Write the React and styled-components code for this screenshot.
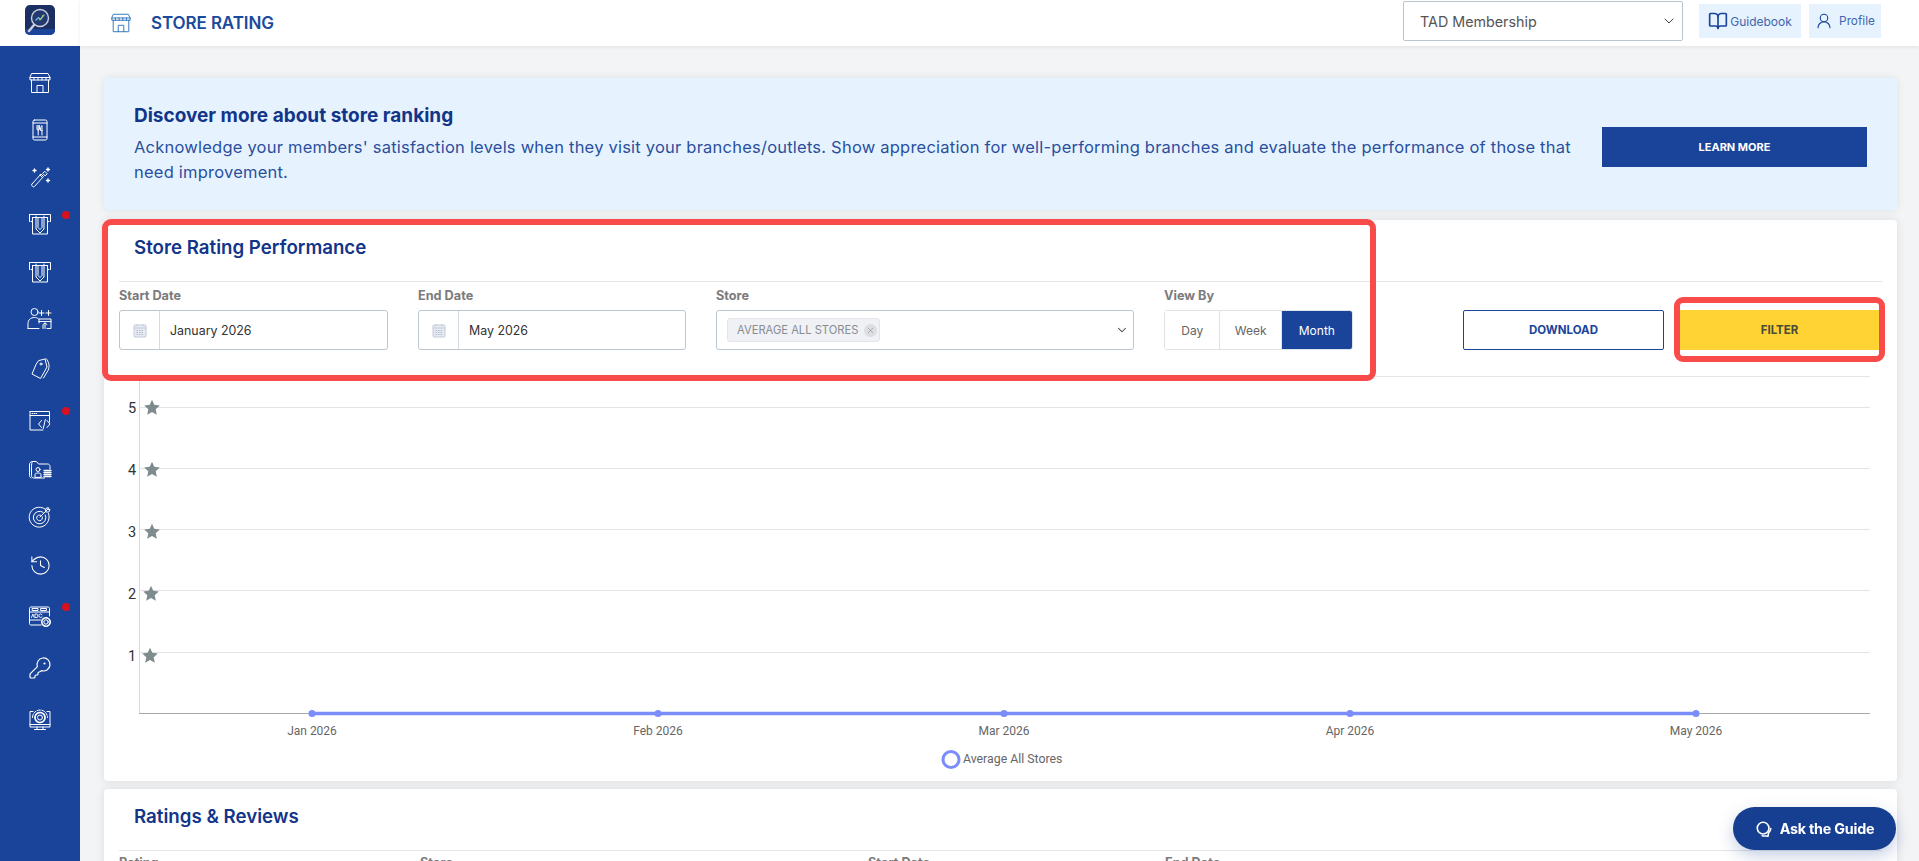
import styled, { createGlobalStyle } from "styled-components";
import { ChevronDown, X, BookOpen, UserRound, KeyRound, History } from "lucide-react";

const GlobalStyle = createGlobalStyle`
  html, body { margin: 0; padding: 0; height: 100%; overflow: hidden; }
  body { background: #f3f4f6; font-family: Inter, "Open Sans", sans-serif; }
  * { box-sizing: border-box; }
`;

const Shell = styled.div`
  display: flex;
  height: 100vh;
  overflow: hidden;
`;

const Side = styled.aside`
  width: 80px;
  flex: none;
  display: flex;
  flex-direction: column;
`;

const LogoBox = styled.div`
  height: 46px;
  background: #fff;
  display: flex;
  justify-content: center;
  padding-top: 5px;
`;

const Logo = styled.svg`
  width: 30px;
  height: 30px;
`;

const Nav = styled.nav`
  flex: 1;
  background: #1a4499;
  padding-top: 13px;
  display: flex;
  flex-direction: column;
`;

const NavItem = styled.div`
  position: relative;
  height: ${(p) => p.$h}px;
  flex: none;
  display: flex;
  justify-content: center;
  align-items: center;
  color: #fff;
`;

const Dot = styled.span`
  position: absolute;
  left: 62px;
  top: ${(p) => p.$top}px;
  width: 8px;
  height: 8px;
  border-radius: 50%;
  background: #d9101f;
`;

const Icon = styled.svg`
  width: ${(p) => p.$w || 24}px;
  height: ${(p) => p.$s || 24}px;
  fill: none;
  stroke: currentColor;
  stroke-width: 1;
  stroke-linejoin: round;
  stroke-linecap: round;
  flex: none;
`;

const Main = styled.main`
  flex: 1;
  min-width: 0;
  display: flex;
  flex-direction: column;
`;

const Header = styled.header`
  height: 46px;
  flex: none;
  background: #fff;
  box-shadow: 0 1px 4px rgba(0, 0, 0, 0.08);
  display: flex;
  align-items: center;
  padding: 0 38px 0 30px;
  position: relative;
  z-index: 1;
`;

const HeaderIcon = styled.span`
  display: flex;
  color: #2a70b8;
`;

const PageTitle = styled.h1`
  margin: 0 0 0 19px;
  font-size: 17px;
  font-weight: 600;
  letter-spacing: -0.1px;
  color: #1a4a9c;
`;

const HeaderRight = styled.div`
  margin-left: auto;
  display: flex;
  align-items: flex-start;
  height: 100%;
  padding-top: 1px;
`;

const MemberSelect = styled.div`
  width: 280px;
  height: 40px;
  border: 1px solid #b9c4d0;
  border-radius: 2px;
  background: #fff;
  display: flex;
  align-items: center;
  justify-content: space-between;
  padding: 0 5px 0 16px;
  font-size: 14.3px;
  color: #555;
  margin-right: 16px;
`;

const HeadBtn = styled.div`
  height: 34px;
  margin-top: 3px;
  width: ${(p) => p.$w}px;
  margin-left: ${(p) => p.$ml || 0}px;
  background: #e6f3fe;
  color: #3f66b0;
  display: flex;
  align-items: center;
  justify-content: center;
  gap: ${(p) => p.$gap}px;
  font-size: ${(p) => p.$fs}px;
`;

const Content = styled.div`
  flex: 1;
  padding: 32px 22px 0 24px;
  display: flex;
  flex-direction: column;
`;

const Banner = styled.section`
  height: 132px;
  flex: none;
  background: #e6f3fe;
  border-radius: 4px;
  box-shadow: 0 0 10px rgba(0, 0, 0, 0.08);
  display: flex;
  align-items: center;
  justify-content: space-between;
  padding: 0 30px;
  margin-bottom: 10px;
`;

const BannerText = styled.div`
  width: 1450px;
  color: #2a4f9e;
`;

const BannerTitle = styled.h2`
  margin: 0 0 8px;
  font-size: 19px;
  font-weight: 700;
  color: #12358a;
`;

const BannerBody = styled.p`
  margin: 0;
  font-size: 16.5px;
  letter-spacing: 0.22px;
  line-height: 25px;
`;

const LearnBtn = styled.div`
  width: 265px;
  height: 40px;
  margin-top: 5px;
  background: #1a4499;
  color: #fff;
  font-size: 11px;
  font-weight: 700;
  display: flex;
  align-items: center;
  justify-content: center;
`;

const Card = styled.section`
  background: #fff;
  border-radius: 4px;
  box-shadow: 0 0 10px rgba(0, 0, 0, 0.1);
  margin-bottom: 8px;
  flex: none;
  padding: 0 15px;
  position: relative;
`;

const CardTitle = styled.h3`
  margin: 0;
  height: 62px;
  line-height: 55px;
  padding-left: 15px;
  font-size: 18.7px;
  font-weight: 600;
  color: #12358a;
  border-bottom: 1px solid #e3e5e8;
`;

const FilterRow = styled.div`
  display: flex;
  align-items: flex-end;
  gap: 30px;
  padding: 9px 2px 26px 0;
  height: 94px;
  width: 1777px;
  margin-right: -15px;
`;

const Field = styled.div`
  width: ${(p) => p.$w}px;
  flex: none;
`;

const Label = styled.div`
  font-size: 12.7px;
  font-weight: 700;
  color: #7b7b7b;
  line-height: 14px;
  margin-bottom: 7px;
`;

const InputBox = styled.div`
  height: 40px;
  border: 1px solid #bcc6d1;
  border-radius: 3px;
  display: flex;
  align-items: center;
  font-size: 12.4px;
  color: #333;
`;

const Addon = styled.div`
  width: 40px;
  align-self: stretch;
  border-right: 1px solid #d5dbe2;
  display: flex;
  align-items: center;
  justify-content: center;
  margin-right: 10px;
`;

const Chip = styled.div`
  height: 24px;
  margin-left: 10px;
  padding: 0 2px 0 9px;
  background: #f0f1f4;
  border: 1px solid #e3e5e9;
  border-radius: 3px;
  display: flex;
  align-items: center;
  gap: 6px;
  font-size: 11.2px;
  color: #888c93;
`;

const ChipClose = styled.span`
  width: 13px;
  height: 13px;
  border-radius: 50%;
  background: #dcdee2;
  color: #80858c;
  display: flex;
  align-items: center;
  justify-content: center;
`;

const Arrow = styled.span`
  margin-left: auto;
  margin-right: 4px;
  display: flex;
  color: #444;
`;

const Segments = styled.div`
  height: 40px;
  display: flex;
  border: 1px solid #dfe3e8;
  border-radius: 3px;
  overflow: hidden;
`;

const Segment = styled.div`
  width: ${(p) => p.$w}px;
  display: flex;
  align-items: center;
  justify-content: center;
  font-size: 12px;
  color: ${(p) => (p.$active ? "#fff" : "#666")};
  background: ${(p) => (p.$active ? "#1a4499" : "#fff")};
  border-right: ${(p) => (p.$active ? "none" : "1px solid #dfe3e8")};
`;

const Actions = styled.div`
  margin-left: auto;
  display: flex;
  gap: 16px;
  padding-right: 15px;
`;

const ActionBtn = styled.div`
  height: 40px;
  width: ${(p) => p.$w}px;
  display: flex;
  align-items: center;
  justify-content: center;
  font-size: 11.5px;
  font-weight: 700;
  color: ${(p) => (p.$primary ? "#4a4a3a" : "#1a4499")};
  background: ${(p) => (p.$primary ? "#ffd333" : "#fff")};
  border: ${(p) => (p.$primary ? "none" : "1px solid #1a4499")};
  border-radius: ${(p) => (p.$primary ? 0 : 2)}px;
`;

const ChartWrap = styled.div`
  border-top: 1px solid #e3e5e8;
  width: 1751px;
`;

const ChartSvg = styled.svg`
  display: block;
  width: 1751px;
  height: 404px;
`;

const Highlight = styled.div`
  position: absolute;
  border: 6px solid #f94c4a;
  border-radius: 9px;
  pointer-events: none;
  left: ${(p) => p.$l}px;
  top: ${(p) => p.$t}px;
  width: ${(p) => p.$w}px;
  height: ${(p) => p.$h}px;
`;

const ColumnRow = styled.div`
  display: flex;
  padding-top: 5px;
`;

const ColumnHead = styled.div`
  width: ${(p) => p.$w}px;
  font-size: 12.7px;
  font-weight: 700;
  color: #7b7b7b;
  line-height: 14px;
`;

const GuideBtn = styled.div`
  position: fixed;
  left: 1733px;
  top: 807px;
  width: 163px;
  height: 43px;
  border-radius: 22px;
  background: #163f91;
  box-shadow: 0 6px 16px rgba(22, 63, 145, 0.25);
  color: #fff;
  display: flex;
  align-items: center;
  justify-content: center;
  gap: 7px;
  font-size: 14.3px;
  font-weight: 700;
  letter-spacing: -0.2px;
`;

function StoreIcon({ size = 24 }) {
  return (
    <Icon viewBox="0 0 24 24" $w={size} $s={size}>
      <path d="M4 2.5h16l2 4v2.5H2V6.500z" />
      <path d="M2 6.500h20M6 6.500V9M10 6.500V9M14 6.500V9M18 6.500V9" />
      <path d="M3.500 9v12.500h17V9" />
      <path d="M9 21.500v-7h6v7" />
    </Icon>
  );
}

function Atm() {
  return (
    <Icon viewBox="0 0 24 24">
      <path d="M1.500 2.500h21v7M1.500 2.500v7M3 9.500h1.500V5.500h15v4H21" />
      <path d="M4.500 5.500v16.500h15V5.500" />
      <path d="M8 4v13l4 4 4-4V4M10 6v9.500l2 2 2-2V6" />
    </Icon>
  );
}

function CalendarGlyph() {
  return (
    <svg width="14" height="15" viewBox="0 0 14 15">
      <rect x="1" y="2" width="12" height="12" rx="1" fill="#e6eaf1" stroke="#c2ccdb" />
      <path d="M1 5h12M4 1v2M10 1v2" stroke="#c2ccdb" fill="none" />
      <path d="M3.500 7.500h7M3.500 9.500h7M3.500 11.500h7" stroke="#b3bed0" strokeDasharray="1.500 1" fill="none" />
    </svg>
  );
}

const icons = [
  <StoreIcon key="store" />,
  <Icon viewBox="0 0 24 24" key="menu">
    <rect x="5" y="2" width="14" height="20" rx="1.500" />
    <path d="M5 5h14M5 19h14M9 7.500v3.500a1.200 1.200 0 0 0 2.400 0V7.500M10.200 7.500V17M14 17V7.500c-1.400.8-1.600 3-1.400 5H14" />
  </Icon>,
  <Icon viewBox="0 0 24 24" key="wand">
    <path d="M4 19l9-10 2.500 2.500-9 10c-.8.600-1.600.4-2.200-.2s-.9-1.500-.3-2.300z" />
    <path d="M12 10l2.500 2.500M17 6.500l2.200 2.200-2 2.200-2.200-2.200z" />
    <path d="M6.500 4v3M5 5.500h3M20 3v3M18.500 4.500h3M20 14v3M18.500 15.500h3" strokeWidth="1.400" />
  </Icon>,
  <Atm key="atm1" />,
  <Atm key="atm2" />,
  <Icon viewBox="0 0 26 24" key="user" $w={26}>
    <circle cx="7.500" cy="5" r="3.500" />
    <path d="M1 21.500v-5c0-3.500 2.500-6 6.500-6 1.500 0 2.500.3 3.500 1M1 21.500h11" />
    <path d="M14.500 3.500v5M12 6h5M21.500 3.500v5M19 6h5" />
    <path d="M12 12h12v9.500h-4M12 12v4M12 14.500h12M16 21.500v-4l2-1.600 2 1.600M18 16v5.500" />
  </Icon>,
  <Icon viewBox="0 0 24 24" key="tags">
    <path d="M11 3.500l6-1.500 2 8-6.500 11.500L4 17l4-9.500z" />
    <path d="M18 1.500c3 3 4 8 2 12l-4.500 7.500" />
    <circle cx="13" cy="7" r="1" />
  </Icon>,
  <Icon viewBox="0 0 24 24" key="code">
    <path d="M2 2.500h19.500v10.500M2 2.500v18.500h13M2 6.500h19.500" />
    <path d="M4 4.500h.7M6 4.500h.7M8 4.500h.7M13.500 11.500l-3 3.500 3 3.500M19 11.500l3 3.500-3 3.500M17.300 10.500l-2 9" />
  </Icon>,
  <Icon viewBox="0 0 24 24" key="folder">
    <path d="M3 20c-1-.5-1.500-1.500-1.500-2.500V7c0-2 1-3.500 3-3.500h4l2 2.500h9c1.500 0 2.500 1 2.500 2.500V11" />
    <path d="M4.500 3.500c-.8 1-1 3-1 5v9c0 1.500 1 2.500 2 2.500h11" />
    <circle cx="10" cy="11.500" r="2" />
    <path d="M7 19v-2.500c0-1 1-1.500 3-1.500s3 .5 3 1.500V19z" />
    <path d="M16 12.500h7M16 14.500h7M16 16.500h7M16 18.500h7" strokeWidth="1.300" />
  </Icon>,
  <Icon viewBox="0 0 24 24" key="target">
    <path d="M17 4a10 10 0 1 0 3.500 4.500" />
    <path d="M15 7.200a6.300 6.300 0 1 0 2.400 2.800" />
    <path d="M13 10.300a2.900 2.900 0 1 0 1.300 1.500" />
    <path d="M12 12l8-8M17.500 6.500l.3-3 2.500-1-.3 2 2-.3-1 2.500z" />
  </Icon>,
  <History key="history" size={23} strokeWidth={1.1} />,
  <Icon viewBox="0 0 24 24" key="settings">
    <path d="M13 20H3c-1 0-1.500-.5-1.500-1.500V3.500c0-1 .5-1.500 1.500-1.500h17c1 0 1.500.5 1.500 1.500V11" />
    <path d="M1.500 7h20M1.500 15h11" />
    <rect x="4.500" y="3.500" width="5.500" height="2" />
    <rect x="13" y="3.500" width="5.500" height="2" />
    <path d="M3.500 12.500l1.300-3.500 1.300 3.500M7.300 9h2a1 1 0 0 1 0 1.700 1 1 0 0 1 0 1.800h-2zM14 9.500a1.800 1.800 0 1 0 0 2.500" strokeWidth=".9" />
    <circle cx="18" cy="17" r="2.200" />
    <circle cx="18" cy="17" r="4.200" strokeDasharray="2 1" strokeWidth="1.600" />
  </Icon>,
  <KeyRound key="key" size={24} strokeWidth={1.2} />,
  <Icon viewBox="0 0 24 24" key="gear">
    <path d="M5 3.500H2v15.500h20V3.500h-3M2 16.500h20M9 19v2.500M15 19v2.500M6.500 21.500h11" />
    <circle cx="12" cy="9.500" r="2.500" />
    <circle cx="12" cy="9.500" r="5" strokeDasharray="2.500 1" strokeWidth="1.700" />
    <path d="M4.500 9.500a7.500 7.500 0 0 1 15 0" strokeDasharray="3 1.500" />
  </Icon>,
];

const navItems = [
  { h: 47 }, { h: 47 }, { h: 47 },
  { h: 48, dot: 11 }, { h: 47 }, { h: 48 }, { h: 52 },
  { h: 52, dot: 12 }, { h: 46 }, { h: 48 }, { h: 49 },
  { h: 54, dot: 13 }, { h: 48 }, { h: 56 },
];

const grid = [
  { v: 5, y: 30, sx: 33, sy: 31 },
  { v: 4, y: 91, sx: 33, sy: 93 },
  { v: 3, y: 152, sx: 33, sy: 155 },
  { v: 2, y: 213, sx: 32, sy: 217 },
  { v: 1, y: 275, sx: 31, sy: 279 },
];

const months = [
  { x: 193, t: "Jan 2026" },
  { x: 539, t: "Feb 2026" },
  { x: 885, t: "Mar 2026" },
  { x: 1231, t: "Apr 2026" },
  { x: 1577, t: "May 2026" },
];

function Star({ x, y }) {
  const pts = [];
  for (let i = 0; i < 10; i++) {
    const r = i % 2 ? 3.9 : 8.2;
    const a = (Math.PI / 5) * i - Math.PI / 2;
    pts.push(`${(x + r * Math.cos(a)).toFixed(2)},${(y + r * Math.sin(a)).toFixed(2)}`);
  }
  return <polygon points={pts.join(" ")} fill="#7f8c8d" />;
}

function RatingChart() {
  return (
    <ChartWrap>
      <ChartSvg viewBox="0 0 1751 404">
        <line x1="20.500" y1="0" x2="20.500" y2="336" stroke="#d9d9d9" />
        {grid.map((g) => (
          <g key={g.v}>
            <line x1="20" y1={g.y + 0.5} x2="1751" y2={g.y + 0.5} stroke="#e4e4e4" />
            <text x="13" y={g.sy + 5} textAnchor="middle" fontFamily="Roboto, sans-serif" fontSize="14.500" fill="#333">{g.v}</text>
            <Star x={g.sx} y={g.sy} />
          </g>
        ))}
        <line x1="20" y1="336.500" x2="1751" y2="336.500" stroke="#a9a9a9" />
        <line x1={months[0].x} y1="336.500" x2={months[4].x} y2="336.500" stroke="#7b8cfb" strokeWidth="3.500" />
        {months.map((m) => (
          <g key={m.t}>
            <circle cx={m.x} cy="336.500" r="3.500" fill="#7b8cfb" />
            <text x={m.x} y="358" textAnchor="middle" fontFamily="Roboto, sans-serif" fontSize="12" fill="#666">{m.t}</text>
          </g>
        ))}
        <circle cx="832" cy="382.500" r="8" fill="#fff" stroke="#7b8cfb" strokeWidth="3" />
        <text x="844" y="386" fontFamily="Roboto, sans-serif" fontSize="12.300" fill="#666">Average All Stores</text>
      </ChartSvg>
    </ChartWrap>
  );
}

export default function App() {
  return (
    <Shell>
      <GlobalStyle />
      <Side>
        <LogoBox>
          <Logo viewBox="0 0 30 30">
            <rect width="30" height="30" rx="5" fill="#1b2f63" />
            <path d="M0 24h30v1a5 5 0 0 1-5 5H5a5 5 0 0 1-5-5z" fill="#1a4499" />
            <circle cx="15" cy="13" r="8.500" fill="#23396f" stroke="#c8d0de" strokeWidth="1.400" />
            <path d="M9 20l-5 6" stroke="#c8d0de" strokeWidth="2.500" strokeLinecap="round" />
            <path d="M10.500 15.500l3-3 2 2 4-5" fill="none" stroke="#6fc0e8" strokeWidth="1.200" />
            <path d="M14 15l2-1 2-4" fill="none" stroke="#b9d24a" strokeWidth="1" />
          </Logo>
        </LogoBox>
        <Nav>
          {navItems.map((n, i) => (
            <NavItem key={i} $h={n.h}>
              {icons[i]}
              {n.dot && <Dot $top={n.dot} />}
            </NavItem>
          ))}
        </Nav>
      </Side>
      <Main>
        <Header>
          <HeaderIcon><StoreIcon size={22} /></HeaderIcon>
          <PageTitle>STORE RATING</PageTitle>
          <HeaderRight>
            <MemberSelect>
              TAD Membership
              <ChevronDown size={16} strokeWidth={1.5} color="#444" />
            </MemberSelect>
            <HeadBtn $w={102} $gap={2} $fs={12}>
              <BookOpen size={20} strokeWidth={2} color="#1a4499" />
              Guidebook
            </HeadBtn>
            <HeadBtn $w={72} $ml={8} $gap={6} $fs={11.8}>
              <UserRound size={18} strokeWidth={1.5} color="#1a4499" />
              Profile
            </HeadBtn>
          </HeaderRight>
        </Header>
        <Content>
          <Banner>
            <BannerText>
              <BannerTitle>Discover more about store ranking</BannerTitle>
              <BannerBody>
                Acknowledge your members' satisfaction levels when they visit your branches/outlets. Show appreciation for well-performing branches and evaluate the performance of those that need improvement.
              </BannerBody>
            </BannerText>
            <LearnBtn>LEARN MORE</LearnBtn>
          </Banner>
          <Card>
            <CardTitle>Store Rating Performance</CardTitle>
            <FilterRow>
              <Field $w={269}>
                <Label>Start Date</Label>
                <InputBox>
                  <Addon><CalendarGlyph /></Addon>
                  January 2026
                </InputBox>
              </Field>
              <Field $w={268}>
                <Label>End Date</Label>
                <InputBox>
                  <Addon><CalendarGlyph /></Addon>
                  May 2026
                </InputBox>
              </Field>
              <Field $w={418}>
                <Label>Store</Label>
                <InputBox>
                  <Chip>
                    AVERAGE ALL STORES
                    <ChipClose><X size={9} strokeWidth={1.5} /></ChipClose>
                  </Chip>
                  <Arrow><ChevronDown size={14} strokeWidth={1.8} /></Arrow>
                </InputBox>
              </Field>
              <Field $w={189}>
                <Label>View By</Label>
                <Segments>
                  <Segment $w={56}>Day</Segment>
                  <Segment $w={62}>Week</Segment>
                  <Segment $w={71} $active>Month</Segment>
                </Segments>
              </Field>
              <Actions>
                <ActionBtn $w={201}>DOWNLOAD</ActionBtn>
                <ActionBtn $w={199} $primary>FILTER</ActionBtn>
              </Actions>
            </FilterRow>
            <RatingChart />
            <Highlight $l={-2} $t={-1} $w={1274} $h={162} />
            <Highlight $l={1570} $t={77} $w={211} $h={65} />
          </Card>
          <Card>
            <CardTitle>Ratings &amp; Reviews</CardTitle>
            <ColumnRow>
              <ColumnHead $w={301}>Rating</ColumnHead>
              <ColumnHead $w={448}>Store</ColumnHead>
              <ColumnHead $w={297}>Start Date</ColumnHead>
              <ColumnHead $w={200}>End Date</ColumnHead>
            </ColumnRow>
          </Card>
        </Content>
      </Main>
      <GuideBtn>
        <Icon viewBox="0 0 20 20" $w={18} $s={18}>
          <circle cx="9" cy="9" r="6.500" strokeWidth="1.800" />
          <path d="M8 17.500c2 .5 5 .2 6.500 .5l.5-3.500c1.500-1.500 2.500-3 2.500-5" strokeWidth="1.800" />
        </Icon>
        Ask the Guide
      </GuideBtn>
    </Shell>
  );
}
